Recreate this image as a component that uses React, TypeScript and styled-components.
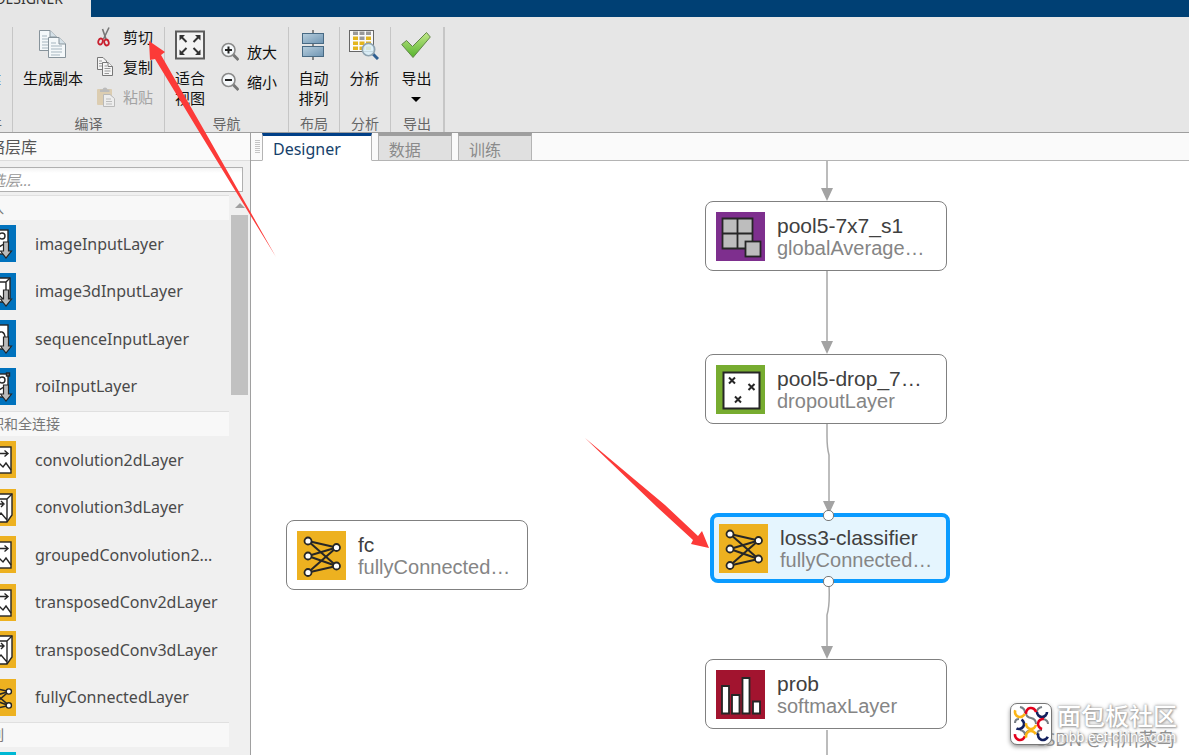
import React from "react";
import styled, { createGlobalStyle, css } from "styled-components";

const uiFont = `"Noto Sans", "Noto Sans CJK SC", sans-serif`;
const nodeFont = `"Liberation Sans", Arial, sans-serif`;

const GlobalStyle = createGlobalStyle`
  * { box-sizing: border-box; }
  body { margin: 0; font-family: ${uiFont}; overflow: hidden; }
  button { font: inherit; color: inherit; border: 0; background: none; padding: 0; cursor: pointer; }
  ul { list-style: none; margin: 0; padding: 0; }
  h2, h3 { margin: 0; font-weight: 400; }
  svg { display: block; flex: none; }
`;

const Page = styled.div`
  position: relative;
  display: flex;
  flex-direction: column;
  height: 100vh;
  overflow: hidden;
  background: #fff;
`;

/* ---------- Title strip and ribbon ---------- */

const TitleBar = styled.header`
  display: flex;
  flex: none;
  height: 17px;
  background: #004074;
  overflow: hidden;
`;

const AppTab = styled.div`
  display: flex;
  justify-content: flex-end;
  width: 91px;
  padding-right: 28px;
  margin-top: -11px;
  background: #e6e6e6;
  color: #333;
  font-size: 14px;
  line-height: 20px;
`;

const Ribbon = styled.div`
  display: flex;
  flex: none;
  height: 116px;
  padding-top: 10px;
  background: #e6e6e6;
  border-bottom: 1px solid #9e9e9e;
`;

const Section = styled.section<{ $width: number; $cut?: boolean; $last?: boolean }>`
  display: flex;
  flex: none;
  flex-direction: column;
  align-items: ${(p) => (p.$cut ? "flex-end" : "center")};
  width: ${(p) => p.$width}px;
  padding-right: ${(p) => (p.$cut ? 10 : 0)}px;
  border-right: ${(p) => (p.$last ? 2 : 1)}px solid #c6c6c6;
  overflow: hidden;
`;

const SectionBody = styled.div<{ $gap?: number }>`
  display: flex;
  flex: 1;
  gap: ${(p) => p.$gap ?? 0}px;
  padding-right: 1px;
`;

const SectionLabel = styled.div`
  color: #666;
  font-size: 14px;
  line-height: 16px;
  white-space: nowrap;
`;

const BigButton = styled.button`
  display: flex;
  flex-direction: column;
  align-items: center;
  align-self: flex-start;
  gap: 8px;
  padding-top: 3px;
  color: #111;
  font-size: 15px;
  line-height: 20px;
  white-space: nowrap;
`;

const Caret = styled.span`
  display: block;
  margin: 9px auto 0;
  width: 0;
  border: 5px solid transparent;
  border-top-color: #000;
  border-bottom: 0;
`;

const SmallColumn = styled.div<{ $offset?: boolean }>`
  display: flex;
  flex-direction: column;
  align-items: flex-start;
  gap: 10px;
  padding-top: ${(p) => (p.$offset ? 15 : 0)}px;
`;

const SmallButton = styled.button`
  display: flex;
  align-items: center;
  gap: 8px;
  height: 20px;
  color: #111;
  font-size: 15px;
  line-height: 20px;
  white-space: nowrap;
  &:disabled { color: #a3a3a3; }
`;

/* ---------- Sidebar ---------- */

const Workspace = styled.div`
  display: flex;
  flex: 1;
  min-height: 0;
`;

const Sidebar = styled.aside`
  flex: none;
  width: 251px;
  border-right: 1px solid #a0a0a0;
  background: #f0f0f0;
  overflow: hidden;
`;

const SidebarInner = styled.div`
  display: flex;
  flex-direction: column;
  height: 100%;
  margin-left: -32px;
`;

const PanelTitle = styled.h2`
  flex: none;
  height: 28px;
  padding-left: 5px;
  border-bottom: 1px solid #dcdcdc;
  background: #fafafa;
  color: #555;
  font-size: 16px;
  line-height: 28px;
`;

const SearchBox = styled.div`
  display: flex;
  flex: none;
  height: 34px;
  padding: 6px 7px 3px 2px;
`;

const SearchInput = styled.input`
  flex: 1;
  min-width: 0;
  padding: 0 4px;
  border: 1px solid #b0b0b0;
  border-radius: 0;
  background: linear-gradient(#f3f3f3, #fff 5px);
  font-family: inherit;
  font-size: 15px;
  &::placeholder { color: #999; font-style: italic; opacity: 1; }
`;

const LibraryArea = styled.div`
  display: flex;
  flex: 1;
  min-height: 0;
`;

const Library = styled.div`
  flex: 1;
  min-width: 0;
  overflow: hidden;
`;

const GroupTitle = styled.h3`
  height: 25px;
  padding-left: 8px;
  border-top: 1px solid #e0e0e0;
  background: #f8f8f8;
  color: #777;
  font-size: 14px;
  line-height: 24px;
`;

const LayerList = styled.ul`
  padding-bottom: 1px;
`;

const LayerItem = styled.li`
  height: 47px;
  &:nth-child(even) { height: 48px; }
`;

const LayerButton = styled.button`
  display: flex;
  align-items: center;
  gap: 19px;
  width: 100%;
  height: 100%;
  padding-left: 11px;
  color: #4a4a4a;
  font-size: 16px;
  white-space: nowrap;
`;

const ScrollTrack = styled.div`
  display: flex;
  flex: none;
  flex-direction: column;
  align-items: center;
  width: 21px;
  padding-top: 8px;
  background: #f0f0f0;
`;

const ScrollUp = styled.span`
  border: 5px solid transparent;
  border-top: 0;
  border-bottom-color: #a0a0a0;
`;

const ScrollThumb = styled.div`
  width: 17px;
  height: 180px;
  margin-top: 7px;
  background: #c1c1c1;
`;

/* ---------- Document area ---------- */

const Main = styled.main`
  display: flex;
  flex: 1;
  flex-direction: column;
  min-width: 0;
`;

const TabBar = styled.div`
  display: flex;
  flex: none;
  gap: 6px;
  height: 28px;
  background: #fafafa;
  box-shadow: inset 0 -1px #b4b4b4;
`;

const Grip = styled.span`
  width: 5px;
  height: 13px;
  margin: 7px -4px 0 4px;
  background: repeating-linear-gradient(#c4c4c4 0 1px, transparent 1px 2px);
`;

const Tab = styled.button<{ $active?: boolean }>`
  display: flex;
  align-items: center;
  height: 28px;
  padding: 2px 30px 0 10px;
  border: 1px solid #b4b4b4;
  border-top: 3px solid #9e9e9e;
  background: #e0e0e0;
  color: #8a8a8a;
  font-size: 16px;
  ${(p) =>
    p.$active &&
    css`
      border-top-color: #003f87;
      border-bottom-color: #fff;
      background: #fff;
      color: #163f6b;
    `}
`;

const Canvas = styled.div`
  position: relative;
  flex: 1;
  overflow: hidden;
  background: #fff;
`;

const Edges = styled.svg`
  position: absolute;
  inset: 0;
  width: 100%;
  height: 100%;
`;

const NodeCard = styled.div<{ $x: number; $y: number; $selected?: boolean }>`
  position: absolute;
  left: ${(p) => p.$x}px;
  top: ${(p) => p.$y}px;
  display: flex;
  align-items: center;
  gap: 12px;
  width: 242px;
  height: 70px;
  padding-left: 10px;
  border: 1px solid #808080;
  border-radius: 8px;
  background: #fff;
  font-family: ${nodeFont};
  ${(p) =>
    p.$selected &&
    css`
      width: 240px;
      padding-left: 5px;
      border: 4px solid #0a9bff;
      background: #e5f5fe;
    `}
`;

const NodeText = styled.div`
  padding-top: 2px;
  line-height: 23px;
  white-space: nowrap;
`;

const NodeName = styled.div`
  color: #404040;
  font-size: 21px;
`;

const NodeKind = styled.div`
  color: #858585;
  font-size: 20px;
`;

const Port = styled.span<{ $bottom?: boolean }>`
  position: absolute;
  left: 109px;
  ${(p) => (p.$bottom ? "bottom: -8px;" : "top: -7px;")}
  width: 11px;
  height: 11px;
  border: 1px solid #777;
  border-radius: 5px;
  background: #fff;
`;

const Annotations = styled.svg`
  position: absolute;
  left: 0;
  top: 0;
  width: 100%;
  height: 100%;
  pointer-events: none;
`;

const Watermark = styled.div`
  position: absolute;
  right: 8px;
  bottom: 10px;
  display: flex;
  align-items: center;
  gap: 5px;
`;

const Credit = styled.div`
  position: absolute;
  right: 6px;
  bottom: -7px;
  color: #8c8c8c;
  font-size: 18px;
  line-height: 26px;
  white-space: nowrap;
`;

const BrandLogo = styled.div`
  position: relative;
  padding: 1px;
  border: 1px solid #777;
  border-radius: 7px;
  background: #fff;
  box-shadow: 0 2px 4px #999;
`;

const BrandText = styled.div`
  position: relative;
  display: flex;
  flex-direction: column;
  width: 124px;
  color: #fff;
  text-shadow: 0 0 2px #999, 1px 1px 2px #aaa, 0 0 4px #bbb;
  white-space: nowrap;
`;

const BrandName = styled.div`
  font-size: 24px;
  font-weight: 500;
  line-height: 26px;
`;

const BrandUrl = styled.div`
  font-family: ${nodeFont};
  font-size: 14px;
  line-height: 16px;
`;

/* ---------- Ribbon icons ---------- */

const Sheet = ({ x, y }: { x: number; y: number }) => (
  <g transform={`translate(${x} ${y})`} stroke="#87939b" fill="#f4f8fa">
    <path d="M.5.5H11L17.500 7V20.500H.5Z" />
    <path d="M11 .5V7H17.500" fill="#d5e1e8" />
    <path d="M3 6H8M3 9H14M3 12H14M3 15H14M3 18H12" stroke="#a5b5bf" />
  </g>
);

const DuplicateIcon = () => (
  <svg width="30" height="30" viewBox="0 0 30 30">
    <Sheet x={1} y={0} />
    <Sheet x={10} y={7} />
  </svg>
);

const CutIcon = () => (
  <svg width="18" height="20" viewBox="0 0 18 20" fill="none">
    <path d="M5.500 2 9 12M12 .5 6.500 12" stroke="#777" strokeWidth="1.600" />
    <ellipse cx="3.500" cy="14.500" rx="2.200" ry="3" stroke="#c8202f" strokeWidth="1.800" transform="rotate(20 3.500 14.500)" />
    <ellipse cx="9.500" cy="15.500" rx="2.200" ry="3" stroke="#c8202f" strokeWidth="1.800" transform="rotate(-15 9.500 15.500)" />
  </svg>
);

const CopyIcon = () => (
  <svg width="18" height="20" viewBox="0 0 18 20" fill="#f5f5f5" stroke="#777">
    <path d="M.5.5H6L9.500 4V12.500H.5Z" />
    <path d="M2 4H5M2 6.500H7M2 9H7" stroke="#999" />
    <path d="M5.500 5.500H11L15.500 9.500V18.500H5.500Z" />
    <path d="M11 5.500V9.500H15.500" />
    <path d="M7.500 9H10M7.500 11.500H13.500M7.500 14H13.500M7.500 16.500H12" stroke="#999" />
  </svg>
);

const PasteIcon = () => (
  <svg width="18" height="20" viewBox="0 0 18 20">
    <rect x="0" y="2" width="15" height="16" rx="1" fill="#dccdb1" />
    <path d="M3 5V2.500H5.500Q6 .5 8 .5T10.500 2.500H12.500V5Z" fill="#bbb" />
    <path d="M6.500 7.500H13L17.500 11.500V19.500H6.500Z" fill="#ededed" stroke="#b9b9b9" />
    <path d="M9 12H14M9 14.500H15M9 17H15" stroke="#bbb" />
  </svg>
);

const FitIcon = () => (
  <svg width="30" height="30" viewBox="0 0 30 30">
    <rect x="1" y="1.500" width="28" height="27" fill="#f4f4f4" stroke="#5c5c5c" strokeWidth="2" />
    <g fill="#333" stroke="#333">
      <path d="M4.500 5H10L4.500 10.500ZM25.500 5H20L25.500 10.500ZM4.500 25H10L4.500 19.500ZM25.500 25H20L25.500 19.500Z" stroke="none" />
      <path d="M6 6.500 11.500 12M24 6.500 18.500 12M6 23.500 11.500 18M24 23.500 18.500 18" strokeWidth="2" />
    </g>
  </svg>
);

const ZoomIcon = ({ plus }: { plus?: boolean }) => (
  <svg width="18" height="20" viewBox="0 0 18 20">
    <path d="M12 12.500 17.500 18" stroke="#777" strokeWidth="3" />
    <circle cx="7.500" cy="8" r="6.500" fill="#f5f8fa" stroke="#8b8b8b" strokeWidth="1.600" />
    <path d={plus ? "M4 8H11M7.500 4.500V11.500" : "M4 8H11"} stroke="#222" strokeWidth="2" />
  </svg>
);

const ArrangeIcon = () => (
  <svg width="30" height="30" viewBox="0 0 30 30">
    <defs>
      <linearGradient id="bar" x1="0" y1="0" x2="1" y2="1">
        <stop offset="0" stopColor="#b8cfde" />
        <stop offset="1" stopColor="#6e94b2" />
      </linearGradient>
    </defs>
    <path d="M15 0V30" stroke="#222" />
    <rect x="4.500" y="3.500" width="21" height="10" fill="url(#bar)" stroke="#486a84" />
    <rect x="4.500" y="16.500" width="21" height="10" fill="url(#bar)" stroke="#486a84" />
  </svg>
);

const AnalyzeIcon = () => (
  <svg width="30" height="30" viewBox="0 0 30 30">
    <rect x=".5" y=".5" width="24" height="21" fill="#fafafa" stroke="#666" />
    {[0, 1, 2, 3].map((row) =>
      [0, 1, 2].map((col) => (
        <rect
          key={`${row}-${col}`}
          x={4 + col * 6.5}
          y={1.5 + row * 5}
          width="5"
          height="3.500"
          fill={row === 0 || (row === 1 && col === 1) ? "#999" : "#e3b51c"}
        />
      ))
    )}
    <path d="M23.500 23.500 29 29" stroke="#2f5f91" strokeWidth="3" />
    <circle cx="19.500" cy="19.500" r="6.200" fill="#d7edf8" fillOpacity=".85" stroke="#8fa3b0" strokeWidth="1.600" />
  </svg>
);

const CheckIcon = () => (
  <svg width="30" height="30" viewBox="0 0 30 30">
    <defs>
      <linearGradient id="check" x1="0" y1="0" x2="0" y2="1">
        <stop offset="0" stopColor="#c3e88a" />
        <stop offset="1" stopColor="#55b32c" />
      </linearGradient>
    </defs>
    <path d="M.7 14.500 5.500 10.500 11.500 16.500 25.500 2.500 29.300 7 12 27.500Z" fill="url(#check)" stroke="#62864a" />
  </svg>
);

const NewIcon = () => (
  <svg width="30" height="30" viewBox="0 0 30 30">
    <rect x="4" y="10" width="11" height="10" fill="#c49a4a" />
  </svg>
);

/* ---------- Layer icons ---------- */

type Glyph = "image" | "image3d" | "sequence" | "roi" | "conv" | "conv3d" | "full" | "pool" | "drop" | "softmax" | "lstm";

const tileColors: Record<Glyph, string> = {
  image: "#0072bd",
  image3d: "#0072bd",
  sequence: "#0072bd",
  roi: "#0072bd",
  conv: "#edb120",
  conv3d: "#edb120",
  full: "#edb120",
  pool: "#7e2f8e",
  drop: "#77ac30",
  softmax: "#a2142f",
  lstm: "#00b8d4",
};

const DownArrow = () => <path d="M24.500 17H29.500V26H32.500L27 33 21.500 26H24.500Z" fill="#bbb" strokeWidth="1.200" />;

const links = [
  [11, 10, 39.5, 16.5],
  [11, 10, 39.5, 35],
  [11, 25, 39.5, 16.5],
  [11, 25, 39.5, 35],
  [11, 41.5, 39.5, 16.5],
  [11, 41.5, 39.5, 35],
];
const neurons = [[11, 10], [11, 25], [11, 41.5], [39.5, 16.5], [39.5, 35]];

const glyphs: Record<Glyph, React.ReactNode> = {
  image: (
    <>
      <rect x="5" y="5" width="24" height="24" />
      <circle cx="23" cy="11" r="3" />
      <path d="M6 26 14 17 20 22 25 19" />
      <DownArrow />
    </>
  ),
  image3d: (
    <>
      <path d="M5 9 9 5H31V25L27 29H5Z" />
      <path d="M5 9H27V29M27 9 31 5M6 26 14 16 20 22 24 26" />
      <DownArrow />
    </>
  ),
  sequence: (
    <>
      <rect x="5" y="5" width="24" height="24" />
      <path d="M7 18Q10 10 13 17T18 17Q20 11 23 12T26 18H29" fill="none" />
      <DownArrow />
    </>
  ),
  roi: (
    <>
      <rect x="5" y="6" width="24" height="23" />
      <rect x="27.500" y="5" width="3" height="3" fill="#777" />
      <circle cx="23" cy="12" r="3" />
      <path d="M6 26 14 17 20 22 25 19" />
      <DownArrow />
    </>
  ),
  conv: (
    <>
      <rect x="5" y="6" width="27" height="26" />
      <path d="M8 12.500H28M25.500 9.500 29 12.500 25.500 15.500M6 28 12 21 17 27 21 23 24 26 27 22 32 29" fill="none" />
    </>
  ),
  conv3d: (
    <>
      <path d="M5 10 11 5H33V26L28 33H5Z" />
      <path d="M5 10H28V33M28 10 33 5M9 15H24M22 12 25 15 22 18M6 30 13 22 18 28 22 24 28 31" fill="none" />
    </>
  ),
  full: (
    <g transform="scale(.755)">
      {links.map(([a, b, c, d], i) => (
        <path key={i} d={`M${a} ${b}L${c} ${d}`} strokeWidth="2" />
      ))}
      {neurons.map(([x, y], i) => (
        <circle key={i} cx={x} cy={y} r="3.500" strokeWidth="1.800" />
      ))}
    </g>
  ),
  pool: (
    <g transform="scale(.755)" fill="#bdbdbd" strokeWidth="1.800">
      <path d="M6.500 6.500H36.500V36.500H6.500ZM21.500 6.500V36.500M6.500 21.500H36.500" />
      <rect x="29.500" y="29.500" width="15" height="15" />
    </g>
  ),
  drop: (
    <g transform="scale(.755)" strokeWidth="2">
      <rect x="7.500" y="7.500" width="36" height="36" />
      <path d="M13 12.500 19 18.500M19 12.500 13 18.500M32.500 19 38.500 25M38.500 19 32.500 25M19 31.500 25 37.500M25 31.500 19 37.500" />
    </g>
  ),
  softmax: (
    <g transform="scale(.755)" strokeWidth="1.800">
      <path d="M6 16H13V43.500H6ZM16 25H23.500V43.500H16ZM26.500 8H33.500V43.500H26.500ZM37 31.500H44V43.500H37Z" />
    </g>
  ),
  lstm: <rect x="5" y="6" width="26" height="26" />,
};

const LayerTile = ({ glyph, size = 37 }: { glyph: Glyph; size?: number }) => (
  <svg width={size} height={size} viewBox="0 0 37 37">
    <rect width="37" height="37" fill={tileColors[glyph]} />
    <g fill="#fff" stroke="#262626" strokeWidth="1.400">
      {glyphs[glyph]}
    </g>
  </svg>
);

/* ---------- Brand mark ---------- */

const arcs: [number, number, string, number][] = [
  [8, 7, "#fbb516", 20],
  [19, 8, "#e3001b", 170],
  [30, 7, "#13205e", 0],
  [7, 19, "#13205e", -60],
  [19, 19, "#fbb516", 10],
  [31, 19, "#e3001b", 100],
  [8, 30, "#e3001b", 10],
  [19, 31, "#fbb516", 160],
  [31, 30, "#13205e", 20],
];

const BrandMark = () => (
  <svg width="38" height="38" viewBox="0 0 38 38" fill="none" strokeWidth="2.600">
    <path
      d="M8 2Q13 3 13 8M14 8Q14 12 19 13T24 19M25 7Q25 3 30 2M7 14Q3 14 3 18M13 30Q14 26 19 25M31 14Q36 15 36 19M8 25Q13 26 13 30M25 30Q25 25 30 25"
      stroke="#777e84"
      strokeWidth="2"
    />
    {arcs.map(([x, y, color, turn], i) => (
      <path key={i} d="M5 0A5 5 0 0 1-5 0" stroke={color} transform={`translate(${x} ${y}) rotate(${turn})`} />
    ))}
  </svg>
);

/* ---------- Data ---------- */

const groups: { title: string; layers: [string, Glyph][] }[] = [
  {
    title: "输入",
    layers: [
      ["imageInputLayer", "image"],
      ["image3dInputLayer", "image3d"],
      ["sequenceInputLayer", "sequence"],
      ["roiInputLayer", "roi"],
    ],
  },
  {
    title: "卷积和全连接",
    layers: [
      ["convolution2dLayer", "conv"],
      ["convolution3dLayer", "conv3d"],
      ["groupedConvolution2...", "conv"],
      ["transposedConv2dLayer", "conv"],
      ["transposedConv3dLayer", "conv3d"],
      ["fullyConnectedLayer", "full"],
    ],
  },
  { title: "序列", layers: [["lstmLayer", "lstm"]] },
];

const nodes: { name: string; kind: string; glyph: Glyph; x: number; y: number; selected?: boolean }[] = [
  { name: "pool5-7x7_s1", kind: "globalAverage…", glyph: "pool", x: 454, y: 40 },
  { name: "pool5-drop_7…", kind: "dropoutLayer", glyph: "drop", x: 454, y: 193 },
  { name: "fc", kind: "fullyConnected…", glyph: "full", x: 35, y: 359 },
  { name: "loss3-classifier", kind: "fullyConnected…", glyph: "full", x: 459, y: 352, selected: true },
  { name: "prob", kind: "softmaxLayer", glyph: "softmax", x: 454, y: 498 },
];

export default function App() {
  return (
    <Page>
      <GlobalStyle />
      <TitleBar>
        <AppTab>DESIGNER</AppTab>
      </TitleBar>
      <Ribbon>
        <Section $width={13} $cut>
          <SectionBody>
            <BigButton>
              <NewIcon />
              <span>新建</span>
            </BigButton>
          </SectionBody>
          <SectionLabel>文件</SectionLabel>
        </Section>
        <Section $width={152}>
          <SectionBody $gap={14}>
            <BigButton>
              <DuplicateIcon />
              <span>生成副本</span>
            </BigButton>
            <SmallColumn>
              <SmallButton><CutIcon />剪切</SmallButton>
              <SmallButton><CopyIcon />复制</SmallButton>
              <SmallButton disabled><PasteIcon />粘贴</SmallButton>
            </SmallColumn>
          </SectionBody>
          <SectionLabel>编译</SectionLabel>
        </Section>
        <Section $width={124}>
          <SectionBody $gap={16}>
            <BigButton>
              <FitIcon />
              <span>适合<br />视图</span>
            </BigButton>
            <SmallColumn $offset>
              <SmallButton><ZoomIcon plus />放大</SmallButton>
              <SmallButton><ZoomIcon />缩小</SmallButton>
            </SmallColumn>
          </SectionBody>
          <SectionLabel>导航</SectionLabel>
        </Section>
        <Section $width={51}>
          <SectionBody>
            <BigButton>
              <ArrangeIcon />
              <span>自动<br />排列</span>
            </BigButton>
          </SectionBody>
          <SectionLabel>布局</SectionLabel>
        </Section>
        <Section $width={51}>
          <SectionBody>
            <BigButton>
              <AnalyzeIcon />
              <span>分析</span>
            </BigButton>
          </SectionBody>
          <SectionLabel>分析</SectionLabel>
        </Section>
        <Section $width={54} $last>
          <SectionBody>
            <BigButton>
              <CheckIcon />
              <span>导出<Caret /></span>
            </BigButton>
          </SectionBody>
          <SectionLabel>导出</SectionLabel>
        </Section>
      </Ribbon>

      <Workspace>
        <Sidebar>
          <SidebarInner>
            <PanelTitle>网络层库</PanelTitle>
            <SearchBox>
              <SearchInput type="text" aria-label="筛选层" placeholder="筛选层..." />
            </SearchBox>
            <LibraryArea>
              <Library>
                {groups.map((group) => (
                  <section key={group.title}>
                    <GroupTitle>{group.title}</GroupTitle>
                    <LayerList>
                      {group.layers.map(([name, glyph]) => (
                        <LayerItem key={name}>
                          <LayerButton>
                            <LayerTile glyph={glyph} />
                            {name}
                          </LayerButton>
                        </LayerItem>
                      ))}
                    </LayerList>
                  </section>
                ))}
              </Library>
              <ScrollTrack>
                <ScrollUp />
                <ScrollThumb />
              </ScrollTrack>
            </LibraryArea>
          </SidebarInner>
        </Sidebar>

        <Main>
          <TabBar role="tablist">
            <Grip />
            <Tab role="tab" aria-selected="true" $active>Designer</Tab>
            <Tab role="tab" aria-selected="false">数据</Tab>
            <Tab role="tab" aria-selected="false">训练</Tab>
          </TabBar>
          <Canvas>
            <Edges>
              <g fill="none" stroke="#bcbcbc" strokeWidth="2">
                <path d="M576 0V30M576 110V183M576 569V700" />
                <path d="M576 262V275Q576 287 578 294V343M578 424Q579 444 576 454V488" stroke="#a8a8a8" strokeWidth="1.500" />
              </g>
              <path
                d="M570 27H582L576 40ZM570 180H582L576 193ZM572 340H584L578 353ZM570 485H582L576 498Z"
                fill="#a3a3a3"
              />
            </Edges>
            {nodes.map((node) => (
              <NodeCard key={node.name} $x={node.x} $y={node.y} $selected={node.selected}>
                <LayerTile glyph={node.glyph} size={49} />
                <NodeText>
                  <NodeName>{node.name}</NodeName>
                  <NodeKind>{node.kind}</NodeKind>
                </NodeText>
                {node.selected && (
                  <>
                    <Port />
                    <Port $bottom />
                  </>
                )}
              </NodeCard>
            ))}
          </Canvas>
        </Main>
      </Workspace>

      <Annotations fill="#fc3a38">
        <path d="M149 41 165 52 161 55 204 130 276 257 198 130 155 59 150 60Z" />
        <path d="M709 548 702 531 698 536 665 505 585 438 657 507 693 540 691 544Z" />
      </Annotations>

      <Watermark>
        <Credit>CSDN @川川菜鸟</Credit>
        <BrandLogo>
          <BrandMark />
        </BrandLogo>
        <BrandText>
          <BrandName>面包板社区</BrandName>
          <BrandUrl>mbb.eet-china.com</BrandUrl>
        </BrandText>
      </Watermark>
    </Page>
  );
}
